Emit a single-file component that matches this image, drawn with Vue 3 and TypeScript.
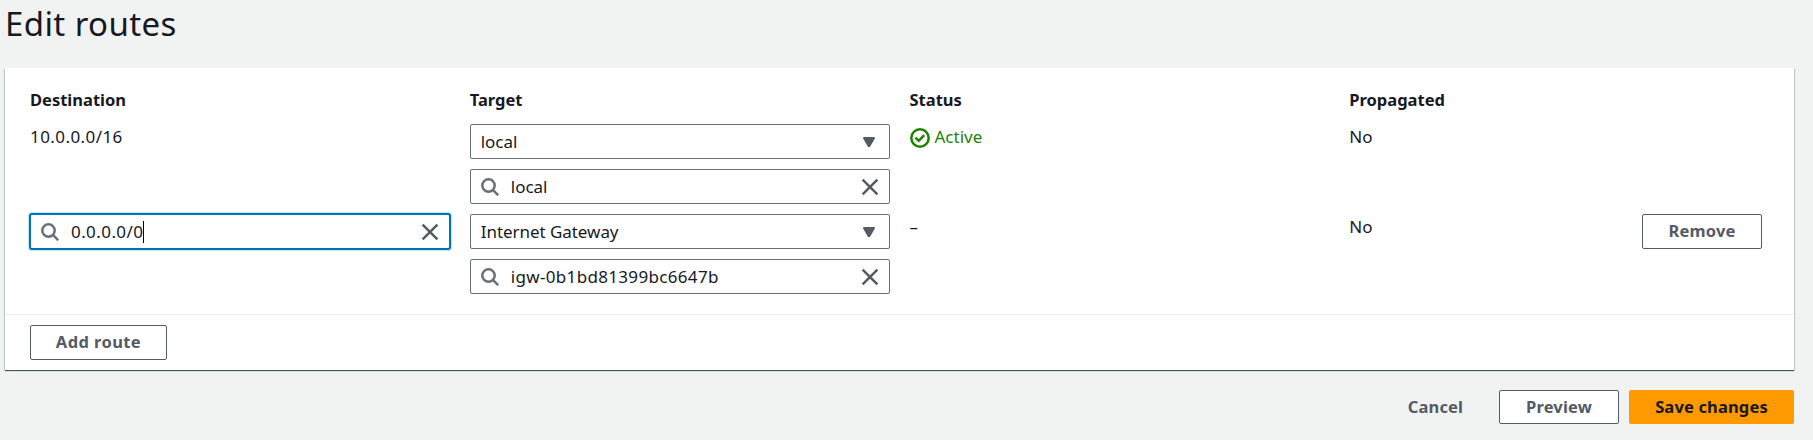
<script setup lang="ts">
interface Route {
  destination: string
  editable: boolean
  target: string
  targetId: string
  status: string
  propagated: string
}

const columns: string[] = ['Destination', 'Target', 'Status', 'Propagated']

const routes: Route[] = [
  { destination: '10.0.0.0/16', editable: false, target: 'local', targetId: 'local', status: 'Active', propagated: 'No' },
  { destination: '0.0.0.0/0', editable: true, target: 'Internet Gateway', targetId: 'igw-0b1bd81399bc6647b', status: '–', propagated: 'No' },
]
</script>

<template>
  <main class="page">
    <h1 class="title">Edit routes</h1>
    <section class="card">
      <div class="table">
        <div class="row head">
          <div v-for="c in columns" :key="c" class="th">{{ c }}</div>
        </div>
        <div v-for="r in routes" :key="r.destination" class="row entry">
          <div v-if="!r.editable" class="text numeric">{{ r.destination }}</div>
          <div v-else class="field focused">
            <svg class="search" viewBox="0 0 18 18"><circle cx="7.5" cy="7.5" r="6.2" /><path d="M11.9 11.9 L17.2 17.2" /></svg>
            <span class="value numeric">{{ r.destination }}</span><i class="caret"></i>
            <svg class="clear" viewBox="0 0 18 18"><path d="M1.6 1.6 L16.4 16.4 M16.4 1.6 L1.6 16.4" /></svg>
          </div>
          <div class="stack">
            <div class="field select">
              <span class="value">{{ r.target }}</span>
              <svg class="arrow" viewBox="0 0 12 10"><path d="M1 1 H11 L6.4 9 H5.6 Z" /></svg>
            </div>
            <div class="field">
              <svg class="search" viewBox="0 0 18 18"><circle cx="7.5" cy="7.5" r="6.2" /><path d="M11.9 11.9 L17.2 17.2" /></svg>
              <span class="value" :class="{ gateway: r.editable }">{{ r.targetId }}</span>
              <svg class="clear" viewBox="0 0 18 18"><path d="M1.6 1.6 L16.4 16.4 M16.4 1.6 L1.6 16.4" /></svg>
            </div>
          </div>
          <div class="text status" :class="{ active: !r.editable }">
            <svg v-if="!r.editable" class="check" viewBox="0 0 20 20"><circle cx="10" cy="10" r="8.7" /><path d="M5.4 9.7 L8.8 12.8 L14.2 7.2" /></svg>
            <span>{{ r.status }}</span>
          </div>
          <div class="last">
            <div class="text">{{ r.propagated }}</div>
            <button v-if="r.editable" class="btn remove">Remove</button>
          </div>
        </div>
      </div>
      <div class="footer"><button class="btn add">Add route</button></div>
    </section>
    <div class="actions">
      <button class="btn link">Cancel</button>
      <button class="btn preview">Preview</button>
      <button class="btn primary">Save changes</button>
    </div>
  </main>
</template>

<style>
body { margin: 0; background: #f1f3f3; }
</style>
<style scoped>
.page {
  box-sizing: border-box;
  width: 1813px;
  height: 440px;
  padding: 0 19px 0 5px;
  overflow: hidden;
  background: #f1f3f3;
  color: #16191f;
  font: 17px/27px "Noto Sans", "Open Sans", sans-serif;
}
.title {
  margin: 0;
  padding-bottom: 20px;
  height: 48px;
  font-size: 33px;
  line-height: 48px;
  font-weight: 400;
  letter-spacing: .4px;
  white-space: nowrap;
}
.card {
  box-sizing: border-box;
  height: 302px;
  background: #fff;
  box-shadow: 0 1px 1px 0 rgba(0, 28, 36, .3), 1px 1px 1px 0 rgba(0, 28, 36, .15), -1px 1px 1px 0 rgba(0, 28, 36, .15), 0 1px 0 #879196;
}
.table { box-sizing: border-box; height: 246px; padding: 18px 25px 0; }
.row { display: grid; grid-template-columns: repeat(4, 419.75px); column-gap: 20px; }
.head { height: 37px; font-weight: 700; }
.th { line-height: 27px; font-size: 16.5px; }
.entry { height: 90px; align-items: start; }
.text { line-height: 27px; }
.numeric { letter-spacing: .42px; }
.gateway { letter-spacing: .33px; }
.stack { display: grid; gap: 10px; padding-top: 1px; }
.field {
  box-sizing: border-box;
  display: flex;
  align-items: center;
  height: 35px;
  padding: 0 10px;
  border: 1px solid #687078;
  border-radius: 2px;
  background: #fff;
}
.focused {
  width: 422px;
  height: 37px;
  margin: 0 -1px;
  border: 2px solid #0073bb;
  border-radius: 3px;
  box-shadow: 0 0 0 1px rgba(0, 161, 201, .25);
}
.value { line-height: 27px; white-space: nowrap; }
.select .value { letter-spacing: -.05px; }
.search { width: 18px; height: 18px; margin-right: 12px; fill: none; stroke: #687078; stroke-width: 2.5; }
.clear { width: 18px; height: 18px; margin-left: auto; fill: none; stroke: #545b64; stroke-width: 2.5; }
.arrow { width: 12px; height: 10px; margin-left: auto; margin-right: 4px; fill: #545b64; stroke: #545b64; stroke-width: 2; stroke-linejoin: round; }
.caret { width: 1px; height: 22px; background: #000; }
.status { display: flex; align-items: center; }
.active { color: #1d8102; }
.check { width: 20px; height: 20px; margin-top: 2px; margin-right: 5px; fill: none; stroke: #1d8102; stroke-width: 2.5; }
.last { display: flex; justify-content: space-between; align-items: flex-start; padding-right: 7px; }
.footer { box-sizing: border-box; height: 56px; padding: 10px 25px; border-top: 1px solid #eaeded; }
.btn {
  box-sizing: border-box;
  height: 35px;
  padding: 0 0 2px;
  border: 1px solid #545b64;
  border-radius: 2px;
  background: #fff;
  color: #545b64;
  font: 700 16.5px/27px "Noto Sans", "Open Sans", sans-serif;
  letter-spacing: .15px;
  white-space: nowrap;
}
.add { width: 137px; letter-spacing: .4px; }
.remove { width: 120px; margin-top: 1px; }
.actions { display: flex; justify-content: flex-end; gap: 10px; padding-top: 20px; }
.actions .btn { height: 34px; }
.link { width: 107px; border-color: transparent; background: transparent; }
.preview { width: 120px; }
.actions .primary { width: 165px; border-color: #f90; background: #f90; color: #16191f; }
</style>
